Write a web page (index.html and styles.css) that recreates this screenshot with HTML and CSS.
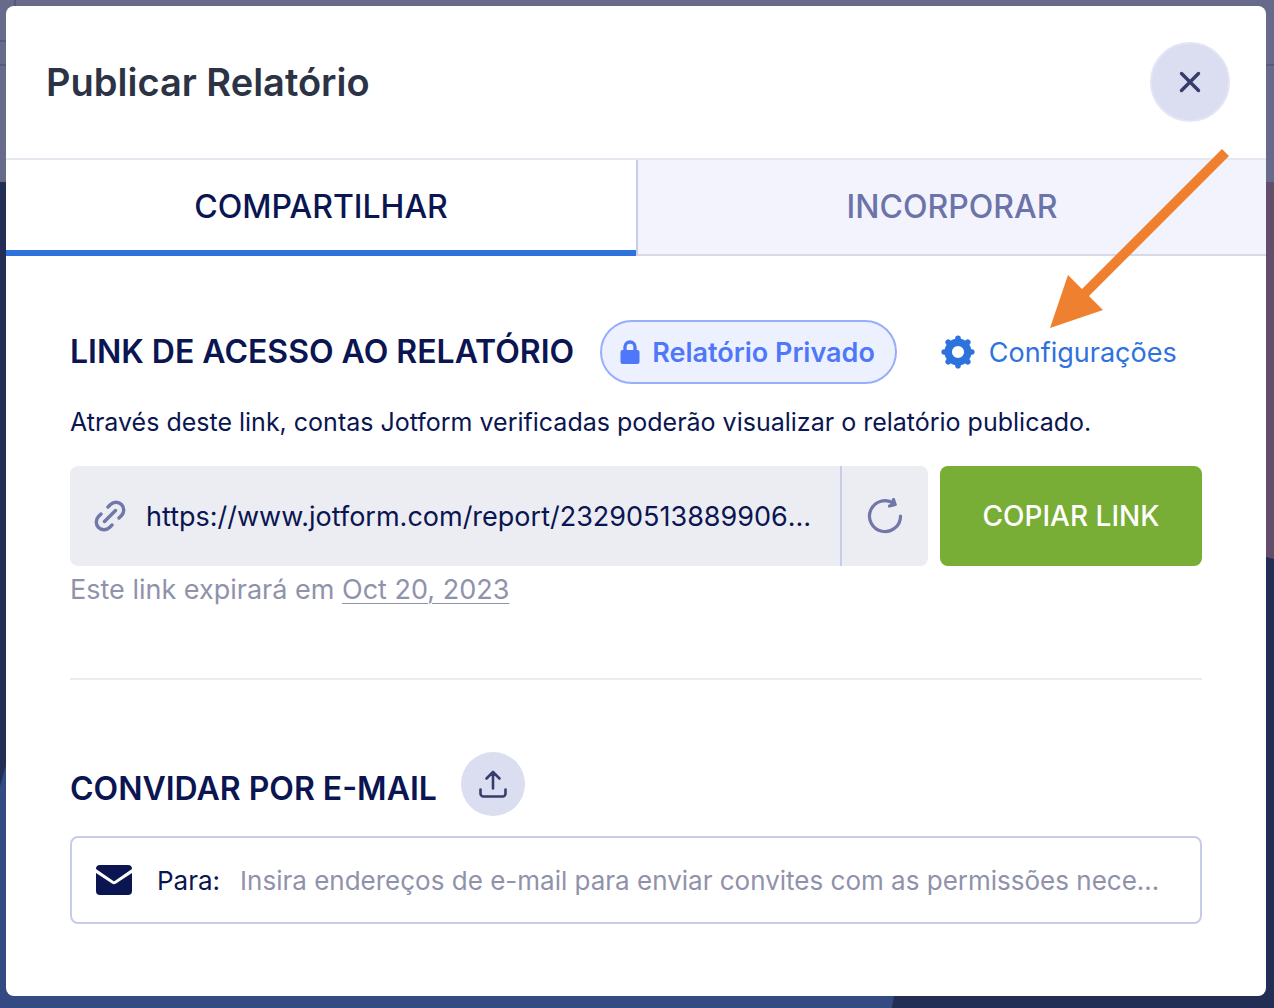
FILE: index.html
```html
<!DOCTYPE html>
<html lang="pt-BR">
<head>
<meta charset="utf-8">
<meta name="viewport" content="width=device-width, initial-scale=1">
<title>Publicar Relatório</title>
<link rel="stylesheet" href="styles.css">
</head>
<body>
<svg class="backdrop" viewBox="0 0 1274 1008" preserveAspectRatio="none" aria-hidden="true">
  <rect width="1274" height="1008" fill="#222e54"/>
  <rect width="1274" height="182" fill="#676a8a"/>
  <path d="M15 0V6M0 41H6M0 65H6M1266 65H1274" stroke="#565a80" stroke-width="2"/>
  <path d="M1266 182H1274V559L1266 557Z" fill="#624e6b"/>
  <path d="M0 786L6 765V985H20V996H894L892 1008H0Z" fill="#344a82"/>
</svg>

<main class="modal" role="dialog" aria-labelledby="modal-title">
  <header class="modal-header">
    <h1 class="modal-title" id="modal-title">Publicar Relatório</h1>
    <button class="close-button" type="button" aria-label="Fechar">
      <svg width="22" height="22" viewBox="0 0 22 22" fill="none" stroke="#363c6b" stroke-width="3.400" stroke-linecap="round"><path d="M2.500 2.500L19.500 19.500M19.500 2.500L2.500 19.500"/></svg>
    </button>
  </header>

  <div class="tabs" role="tablist">
    <button class="tab tab-active" type="button" role="tab" aria-selected="true">COMPARTILHAR</button>
    <button class="tab" type="button" role="tab" aria-selected="false">INCORPORAR</button>
  </div>

  <div class="modal-body">
    <section class="link-section">
      <div class="link-heading">
        <h2 class="section-title"><label for="report-link">LINK DE ACESSO AO RELATÓRIO</label></h2>
        <span class="badge">
          <svg width="20" height="24" viewBox="0 0 20 24"><path d="M5 11V7a5 5 0 0 1 10 0v4" fill="none" stroke="#4f78f8" stroke-width="3.400"/><rect x="0.500" y="10" width="19" height="14" rx="2" fill="#4f78f8"/></svg>
          Relatório Privado
        </span>
        <a class="settings-link" href="#configuracoes">
          <svg width="34" height="34" viewBox="0 0 34 34" fill="none" stroke="#2e72dd"><circle cx="17" cy="17" r="9.800" stroke-width="7.400"/><path stroke-width="5.600" stroke-linecap="round" stroke-linejoin="round" d="M17 7V3.200M17 27V30.800M7 17H3.200M27 17H30.800M10 10L7.200 7.200M24 10L26.800 7.200M10 24L7.200 26.800M24 24L26.800 26.800"/></svg>
          Configurações
        </a>
      </div>
      <p class="description">Através deste link, contas Jotform verificadas poderão visualizar o relatório publicado.</p>
      <div class="link-row">
        <div class="link-box">
          <svg class="chain" width="32" height="32" viewBox="0 0 32 32" fill="none" stroke="#7277a9" stroke-width="3.400" stroke-linecap="round"><path d="M10.500 21.500L21.500 10.500M14 7L16.500 4.500A7.900 7.900 0 0 1 27.500 4.500A7.900 7.900 0 0 1 27.500 15.500L25 18M18 25L15.500 27.500A7.900 7.900 0 0 1 4.500 27.500A7.900 7.900 0 0 1 4.500 16.500L7 14"/></svg>
          <input class="link-input" id="report-link" type="text" readonly value="https://www.jotform.com/report/23290513889906541">
          <button class="refresh-button" type="button" aria-label="Gerar novo link">
            <svg width="36" height="36" viewBox="0 0 36 36" fill="none" stroke="#7277a9" stroke-width="3.200" stroke-linecap="round" stroke-linejoin="round"><path d="M33.500 18A15.500 15.500 0 1 1 27 5.500M26.500 1.500L28 6.500L22.500 8"/><path d="M25.500 4L28 6.500L24.500 7Z" fill="#7277a9"/></svg>
          </button>
        </div>
        <button class="copy-button" type="button">COPIAR LINK</button>
      </div>
      <p class="expiry">Este link expirará em <a class="expiry-date" href="#expiracao">Oct 20, 2023</a></p>
    </section>

    <section class="invite-section">
      <div class="invite-heading">
        <h2 class="section-title">CONVIDAR POR E-MAIL</h2>
        <button class="upload-button" type="button" aria-label="Importar contatos">
          <svg width="28" height="28" viewBox="0 0 28 28" fill="none" stroke="#363c6b" stroke-width="2.600" stroke-linecap="round" stroke-linejoin="round"><path d="M14 18.500V2.500M7.500 8.500L14 2L20.500 8.500M1.500 19.500V23.500A3 3 0 0 0 4.500 26.500H23.500A3 3 0 0 0 26.500 23.500V19.500"/></svg>
        </button>
      </div>
      <div class="email-box">
        <svg width="38" height="30" viewBox="0 0 38 30"><path fill="#0a1551" d="M1 4A4 4 0 0 1 5 0H33A4 4 0 0 1 37 4L19.600 16Q19 16.400 18.400 16ZM1 8L17 18.500Q19 19.800 21 18.500L37 8V26A4 4 0 0 1 33 30H5A4 4 0 0 1 1 26Z"/></svg>
        <label class="email-label" for="email-to">Para:</label>
        <input class="email-input" id="email-to" type="text" placeholder="Insira endereços de e-mail para enviar convites com as permissões necessárias">
      </div>
    </section>
  </div>

  <svg class="pointer-arrow" width="179" height="179" viewBox="0 0 179 179" aria-hidden="true"><path fill="#ef802f" d="M172 0L179 7L39 147L53 161L0 179L18 126L32 140Z"/></svg>
</main>
</body>
</html>
```
FILE: styles.css
```css
* {
  box-sizing: border-box;
}

body {
  margin: 0;
  min-height: 100vh;
  padding: 6px 8px 12px 6px;
  background: #222e54;
  color: #0a1551;
  font-family: Inter, "Liberation Sans", sans-serif;
}

h1, h2, p {
  margin: 0;
}

button, input {
  font-family: inherit;
  border: 0;
  padding: 0;
  border-radius: 0;
}

svg {
  display: block;
  flex: none;
}

.backdrop {
  position: absolute;
  top: 0;
  left: 0;
  width: 100%;
  height: 100%;
}

.modal {
  position: relative;
  background: #fff;
  border-radius: 8px;
}

.modal-header {
  display: flex;
  align-items: center;
  justify-content: space-between;
  padding: 36px 36px 36px 40px;
  border-bottom: 2px solid #e7e7f0;
}

.modal-title {
  font-size: 38px;
  line-height: 48px;
  font-weight: 600;
  color: #2c3345;
}

.close-button, .upload-button {
  display: flex;
  align-items: center;
  justify-content: center;
  border-radius: 50%;
  background: #dadef0;
}

.close-button {
  width: 80px;
  height: 80px;
  border: 2px solid #e3e5f5;
}

.tabs {
  display: grid;
  grid-template-columns: 1fr 1fr;
}

.tab {
  height: 96px;
  font-size: 32px;
  line-height: 40px;
  font-weight: 500;
  color: #6c73a8;
  background: #f3f3fe;
  border-left: 2px solid #c8cceb;
  border-bottom: 2px solid #d9d9e6;
}

.tab-active {
  padding-top: 4px;
  color: #0a1551;
  background: #fff;
  border-left: 0;
  border-bottom: 6px solid #2e72dd;
}

.modal-body {
  padding: 64px 64px 72px;
}

.link-heading {
  display: flex;
  align-items: center;
}

.section-title {
  font-size: 32px;
  line-height: 40px;
  font-weight: 600;
  white-space: nowrap;
}

.badge {
  display: flex;
  align-items: center;
  gap: 12px;
  height: 64px;
  margin-left: 26px;
  padding: 0 20px 0 18px;
  border: 2px solid #97aff9;
  border-radius: 32px;
  background: #edf1ff;
  color: #4f78f8;
  font-size: 27px;
  font-weight: 600;
  white-space: nowrap;
}

.settings-link {
  display: flex;
  align-items: center;
  gap: 14px;
  margin-left: 44px;
  color: #2e72dd;
  font-size: 27px;
  text-decoration: none;
  white-space: nowrap;
}

.description {
  margin-top: 22px;
  font-size: 25px;
  line-height: 32px;
  white-space: nowrap;
}

.link-row {
  display: flex;
  gap: 12px;
  margin-top: 28px;
}

.link-box {
  flex: 1;
  min-width: 0;
  height: 100px;
  display: flex;
  align-items: center;
  border-radius: 8px;
  background: #ecedf3;
}

.chain {
  margin: 0 20px 0 24px;
}

.link-input {
  flex: 1;
  min-width: 0;
  height: 40px;
  margin-right: 20px;
  background: none;
  color: #0a1551;
  font-size: 27px;
  text-overflow: ellipsis;
}

.refresh-button {
  align-self: stretch;
  width: 88px;
  display: flex;
  align-items: center;
  justify-content: center;
  background: none;
  border-left: 2px solid #c8cceb;
}

.copy-button {
  width: 262px;
  border-radius: 8px;
  background: #78ae35;
  color: #fff;
  font-size: 28px;
  font-weight: 500;
}

.expiry {
  margin-top: 8px;
  padding-bottom: 72px;
  border-bottom: 2px solid #ebebf0;
  font-size: 27px;
  line-height: 32px;
  color: #9092ab;
}

.expiry-date {
  color: inherit;
  text-decoration-thickness: 1px;
  text-underline-offset: 4px;
}

.invite-heading {
  display: flex;
  align-items: center;
  gap: 24px;
  margin-top: 72px;
}

.invite-heading .section-title {
  padding-top: 10px;
}

.upload-button {
  width: 64px;
  height: 64px;
}

.email-box {
  display: flex;
  align-items: center;
  height: 88px;
  margin-top: 20px;
  padding: 0 32px 0 23px;
  border: 2px solid #c8cceb;
  border-radius: 8px;
}

.email-label {
  margin: 0 20px 0 24px;
  font-size: 26px;
}

.email-input {
  flex: 1;
  min-width: 0;
  height: 40px;
  background: none;
  color: #0a1551;
  font-size: 26px;
  text-overflow: ellipsis;
}

.email-input::placeholder {
  color: #9092ab;
  opacity: 1;
}

.pointer-arrow {
  position: absolute;
  top: 143px;
  right: 37px;
  pointer-events: none;
}
```
